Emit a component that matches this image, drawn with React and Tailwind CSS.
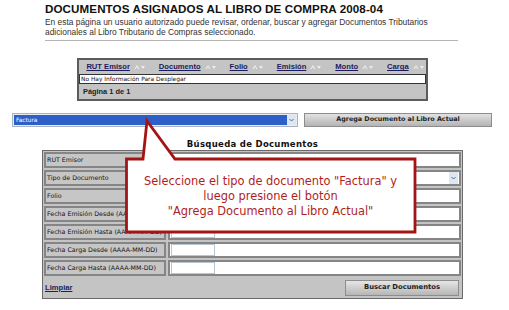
import React from "react";

const Arrows = () => (
  <svg width="12" height="6" viewBox="0 0 12 6" className="ml-[4px]">
    <path d="M1 5 L3 2 L5 5" fill="none" stroke="#ececec" strokeWidth="1.1" />
    <path d="M7 2 L11 2 L9 5 Z" fill="#ececec" />
  </svg>
);

const cols = ["RUT Emisor", "Documento", "Folio", "Emisión", "Monto", "Carga"];

const Label = ({ children }) => (
  <div className="h-[16px] bg-[#c6c6c6] border-2 border-[#858585] flex items-center pl-[1px] text-[6.3px] text-[#111] whitespace-nowrap overflow-hidden" style={{ fontFamily: '"DejaVu Sans", sans-serif' }}>
    {children}
  </div>
);

const Cell = ({ children }) => (
  <div className="h-[16px] bg-white border-2 border-[#858585] flex items-center">{children}</div>
);

const DateInput = () => (
  <div className="ml-[1px] w-[44px] h-[12px] border border-[#b9c6d3] bg-white" />
);

export default function App() {
  return (
    <div className="relative w-[509px] h-[310px] bg-white overflow-hidden" style={{ fontFamily: '"Liberation Sans", Arial, sans-serif' }}>
      <div className="pl-[45px] pt-[2px]">
        <div className="text-[11.6px] leading-[13px] font-bold text-[#111] tracking-[0.1px]">
          DOCUMENTOS ASIGNADOS AL LIBRO DE COMPRA 2008-04
        </div>
        <div className="mt-[2px] text-[8.4px] leading-[10px] text-[#333]">
          En esta página un usuario autorizado puede revisar, ordenar, buscar y agregar Documentos Tributarios
          <br />
          adicionales al Libro Tributario de Compras seleccionado.
        </div>
      </div>
      <div className="ml-[45px] mt-[3px] w-[413px] h-[1px] bg-[#b5b5b5]" />

      {/* results table */}
      <div className="ml-[77px] mt-[17px] w-[351px] h-[43px] border-2 border-[#5c5c5c] bg-[#c4c4c4] flex flex-col">
        <div className="h-[14px] flex items-center justify-center gap-[13px] pl-[6px]">
          {cols.map((c) => (
            <div key={c} className="flex items-center">
              <span className="text-[7.6px] font-bold text-[#1c1c5c] underline">{c}</span>
              <Arrows />
            </div>
          ))}
        </div>
        <div className="h-[10px] bg-white border border-[#333] flex items-center pl-[1px] text-[5.9px] text-[#111]" style={{ fontFamily: '"DejaVu Sans", sans-serif' }}>
          No Hay Información Para Desplegar
        </div>
        <div className="flex-1 flex items-center pl-[4px] text-[7.4px] font-bold text-[#222]">Página 1 de 1</div>
      </div>

      {/* select + button */}
      <div className="mt-[12px] ml-[12px] flex items-center gap-[6px]">
        <div className="w-[286px] h-[14px] border border-[#a9b3be] bg-[#e8ecf0] flex items-center p-[1px]">
          <div className="flex-1 h-full bg-[#2e5ec8] flex items-center pl-[2px] text-[5.8px] text-white" style={{ fontFamily: '"DejaVu Sans", sans-serif' }}>
            Factura
          </div>
          <div className="w-[9px] h-full flex items-center justify-center bg-[#dfe6f0]">
            <svg width="5" height="4" viewBox="0 0 5 4"><path d="M0.5 1 L2.5 3 L4.5 1" fill="none" stroke="#3f6fb8" strokeWidth="1" /></svg>
          </div>
        </div>
        <div className="w-[188px] h-[14px] border border-[#8d8d8d] bg-gradient-to-b from-[#e2e2e2] to-[#b4b4b4] flex items-center justify-center text-[6.4px] font-bold text-[#222]" style={{ fontFamily: '"DejaVu Sans", sans-serif' }}>
          Agrega Documento al Libro Actual
        </div>
      </div>

      <div className="mt-[12px] w-[505px] text-center text-[8.5px] leading-[11px] font-bold text-[#111] tracking-[0.3px]" style={{ fontFamily: '"DejaVu Sans", sans-serif' }}>
        Búsqueda de Documentos
      </div>

      {/* search form */}
      <div className="ml-[42px] w-[421px] h-[149px] border border-[#6a6a6a] bg-[#c4c4c4] p-[1px] flex flex-col gap-[2px]">
        <div className="grid grid-cols-[122px_1fr] gap-x-[2px] gap-y-[2px]">
          <Label>RUT Emisor</Label>
          <Cell />
          <Label>Tipo de Documento</Label>
          <Cell>
            <div className="ml-auto mr-[1px] w-[9px] h-[12px] bg-[#dfe6f0] flex items-center justify-center">
              <svg width="5" height="4" viewBox="0 0 5 4"><path d="M0.5 1 L2.5 3 L4.5 1" fill="none" stroke="#3f6fb8" strokeWidth="1" /></svg>
            </div>
          </Cell>
          <Label>Folio</Label>
          <Cell />
          <Label>Fecha Emisión Desde (AAAA-MM-DD)</Label>
          <Cell><DateInput /></Cell>
          <Label>Fecha Emisión Hasta (AAAA-MM-DD)</Label>
          <Cell><DateInput /></Cell>
          <Label>Fecha Carga Desde (AAAA-MM-DD)</Label>
          <Cell><DateInput /></Cell>
          <Label>Fecha Carga Hasta (AAAA-MM-DD)</Label>
          <Cell><DateInput /></Cell>
        </div>
        <div className="flex-1 flex items-center justify-between pl-[1px] pr-[2px]">
          <span className="text-[7.6px] font-bold text-[#1c1c5c] underline">Limpiar</span>
          <div className="w-[114px] h-[16px] border border-[#8d8d8d] bg-gradient-to-b from-[#e6e6e6] to-[#b6b6b6] flex items-center justify-center text-[6.8px] font-bold text-[#222]" style={{ fontFamily: '"DejaVu Sans", sans-serif' }}>
            Buscar Documentos
          </div>
        </div>
      </div>

      {/* callout overlay */}
      <svg className="absolute left-0 top-0" width="509" height="310" viewBox="0 0 509 310">
        <path d="M126.5 159 H143 L147 121 L175 159 H415 V232 H126.5 Z" fill="white" stroke="#a51414" strokeWidth="2.8" strokeLinejoin="miter" />
      </svg>
      <div className="absolute left-[127px] top-[174px] w-[287px] text-center text-[11.4px] leading-[15px] text-[#b01e1e]" style={{ fontFamily: '"DejaVu Sans", sans-serif' }}>
        Seleccione el tipo de documento "Factura" y
        <br />
        luego presione el botón
        <br />
        "Agrega Documento al Libro Actual"
      </div>
    </div>
  );
}
